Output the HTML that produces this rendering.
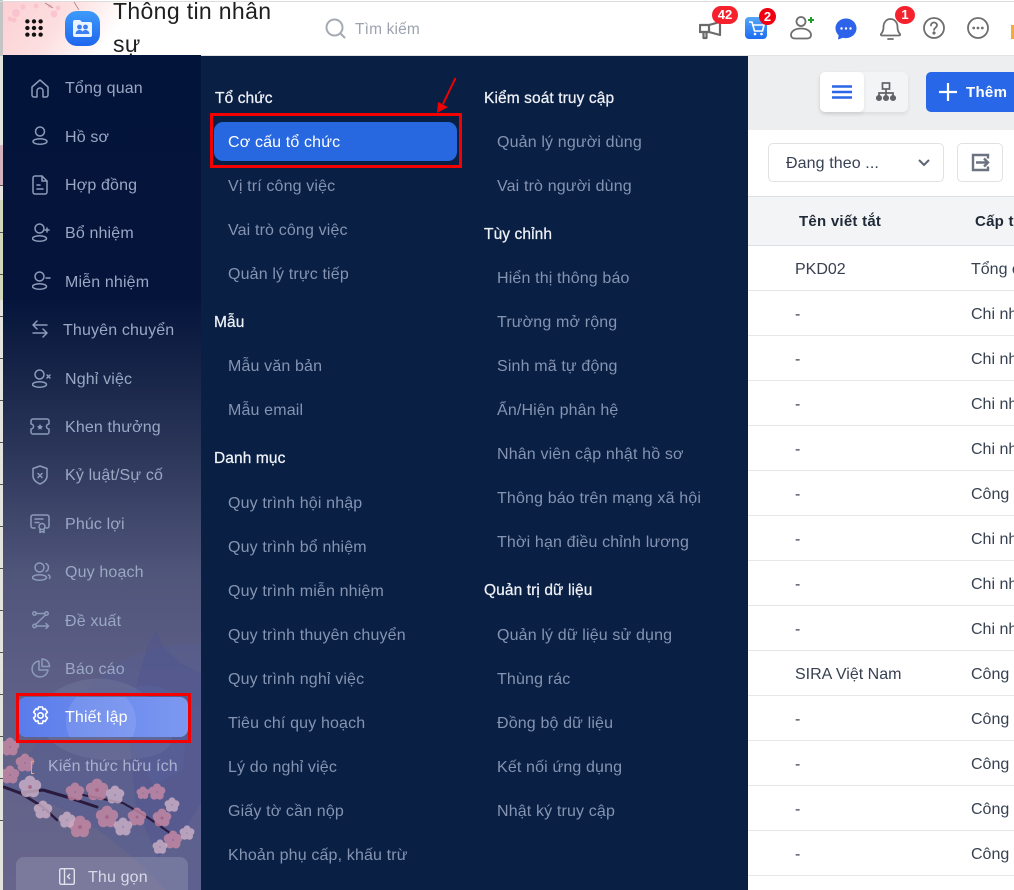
<!DOCTYPE html>
<html lang="vi"><head><meta charset="utf-8"><title>Thông tin nhân sự</title>
<style>
*{box-sizing:border-box}
html,body{margin:0;padding:0;width:1014px;height:890px;overflow:hidden;background:#fff}
body{position:relative;font-family:"Liberation Sans","Noto Sans CJK SC",sans-serif}
#p{position:absolute;left:0;top:0;width:1014px;height:890px;overflow:hidden;contain:paint}
#r{position:absolute;left:748px;top:0;width:266px;height:890px;overflow:hidden}
#r .t{margin-left:-748px}
.a{position:absolute;white-space:nowrap}
.t{position:absolute;white-space:nowrap;line-height:20px;height:20px;margin-top:2px;font-size:16px;letter-spacing:.15px}
.s{color:#9aa8c4}
.m{color:#8494b2;left:228px}
.n{color:#8494b2;left:497px}
.h{color:#eef1f6;font-size:15.5px;letter-spacing:.1px;margin-top:1px;-webkit-text-stroke:.25px #eef1f6}
.c{color:#374151;font-size:16px;letter-spacing:0}
.th{color:#1f2937;font-weight:700;font-size:15px;letter-spacing:.25px}
.l{position:absolute;left:748px;width:266px;height:1px;background:#e5e7eb}
.k{position:absolute;left:0;width:3px;height:1px;background:#555}
svg{position:absolute}
.ic{fill:none;stroke:#8c9bb8;stroke-width:1.5;stroke-linecap:round;stroke-linejoin:round}
.b{position:absolute;background:#f5212d;color:#fff;font-weight:700;font-size:13px;text-align:center;line-height:17px;border-radius:9px;height:18px}
</style></head><body><div id="p">

<!-- left strip -->
<div class="a" style="left:0;top:0;width:3px;height:890px;background:#e4e4df"></div>
<div class="a" style="left:0;top:0;width:3px;height:56px;background:#c4c4c4"></div>
<div class="a" style="left:0;top:145px;width:3px;height:40px;background:#d4b3bd"></div>
<div class="a" style="left:0;top:200px;width:3px;height:100px;background:#d2d8ba"></div>
<div class="k" style="top:185px"></div><div class="k" style="top:232px"></div><div class="k" style="top:274px"></div><div class="k" style="top:316px"></div><div class="k" style="top:358px"></div><div class="k" style="top:400px"></div><div class="k" style="top:442px"></div><div class="k" style="top:484px"></div><div class="k" style="top:526px"></div><div class="k" style="top:568px"></div><div class="k" style="top:610px"></div><div class="k" style="top:652px"></div><div class="k" style="top:694px"></div><div class="k" style="top:736px"></div><div class="k" style="top:778px"></div><div class="k" style="top:820px"></div>

<!-- header -->
<div class="a" style="left:3px;top:0;width:1011px;height:56px;background:#fff;border-bottom:1px solid #e2e3e6"></div>
<div class="a" style="left:3px;top:2px;width:120px;height:53px;background:linear-gradient(125deg,#fcd0d3 0%,#fddfe0 45%,#ffffff 85%)"></div>
<div class="a" style="left:0;top:1px;width:1014px;height:1px;background:#dcdcdc"></div>
<svg style="left:0;top:0" width="130" height="56">
<g fill="#f9bccb" opacity=".7"><circle cx="16" cy="13" r="4"/><circle cx="10" cy="19" r="2.500"/><circle cx="23" cy="7" r="2.500"/><circle cx="36" cy="6" r="2.500"/><circle cx="54" cy="14" r="3.500"/><circle cx="58" cy="8" r="2.500"/><circle cx="50" cy="6" r="2"/><circle cx="14" cy="20" r="2.500"/></g>
<path d="M74 2l5 8M45 3l8 5" stroke="#a88085" stroke-width=".8" fill="none"/>
</svg>
<svg style="left:25px;top:19px" width="18" height="18" viewBox="-0.500 -0.500 19 19" fill="#111"><circle cx="2" cy="2" r="2.300"/><circle cx="9" cy="2" r="2.300"/><circle cx="16" cy="2" r="2.300"/><circle cx="2" cy="9" r="2.300"/><circle cx="9" cy="9" r="2.300"/><circle cx="16" cy="9" r="2.300"/><circle cx="2" cy="16" r="2.300"/><circle cx="9" cy="16" r="2.300"/><circle cx="16" cy="16" r="2.300"/></svg>
<svg style="left:65px;top:11px" width="35" height="35">
<defs><linearGradient id="lg" x1="0" y1="0" x2="0" y2="1"><stop offset="0" stop-color="#3d9bfb"/><stop offset="1" stop-color="#1f66ee"/></linearGradient></defs>
<rect width="35" height="35" rx="12" fill="url(#lg)"/>
<path d="M8 11a2 2 0 0 1 2-2h5l2 2h8a2 2 0 0 1 2 2v11a2 2 0 0 1-2 2H10a2 2 0 0 1-2-2z" fill="#eaf3ff"/>
<circle cx="14.500" cy="16" r="2.400" fill="#3a80f0"/><circle cx="20.500" cy="16" r="2.400" fill="#3a80f0"/>
<path d="M10.500 23c.4-3 2-4 4-4s3.600 1 4 4zM17 23c.4-3 1.800-4 3.500-4s3.600 1 4 4z" fill="#3a80f0"/>
</svg>
<div class="a" style="left:113px;top:-5px;width:175px;font-size:23px;line-height:33px;color:#1f1f1f;letter-spacing:.35px;white-space:normal">Thông tin nhân<br>sự</div>
<svg style="left:325px;top:18px" width="22" height="22" fill="none" stroke="#a4a9b2" stroke-width="2" stroke-linecap="round"><circle cx="9.500" cy="9.500" r="8"/><path d="M15.500 15.500l4 4"/></svg>
<div class="t" style="left:355px;top:18px;color:#9ca3af;font-size:15.500px;letter-spacing:.15px">Tìm kiếm</div>

<!-- header icons -->
<svg style="left:699px;top:21px" width="24" height="19" fill="none" stroke="#6b6b6b" stroke-width="2.200" stroke-linejoin="round" stroke-linecap="round"><path d="M1 4h9l11-3v13l-11-3H1z"/><path d="M4.500 11v6h3v-6"/><path d="M10 4v7"/></svg>
<div class="b" style="left:712px;top:6px;width:26px">42</div>
<svg style="left:745px;top:17px" width="23" height="23">
<defs><linearGradient id="cg" x1="0" y1="0" x2="0" y2="1"><stop offset="0" stop-color="#55a8f8"/><stop offset="1" stop-color="#1c6cf2"/></linearGradient></defs>
<rect width="22" height="22" rx="4" fill="url(#cg)"/>
<path d="M4 5h3l2.500 9h8l1.500-6H8" fill="none" stroke="#fff" stroke-width="1.600" stroke-linejoin="round"/><circle cx="10" cy="17" r="1.300" fill="#fff"/><circle cx="16.500" cy="17" r="1.300" fill="#fff"/>
</svg>
<div class="a" style="left:759px;top:8px;width:17px;height:17px;border-radius:50%;background:#f00010;color:#fff;font-weight:700;font-size:13px;text-align:center;line-height:17px">2</div>
<svg style="left:790px;top:15px" width="26" height="26" fill="none" stroke="#6e6e6e" stroke-width="1.800"><circle cx="11" cy="6.500" r="4.500"/><path d="M1 20c0-4 4.500-6.500 10-6.500S21 16 21 20c0 2.500-2 3.500-4 3.500H5c-2 0-4-1-4-3.500z"/><path d="M21 2v6M18 5h6" stroke="#1f9d2c" stroke-width="2"/></svg>
<svg style="left:835px;top:18px" width="22" height="22"><path d="M11 0.500c5.800 0 10.500 4.300 10.500 9.800s-4.700 9.800-10.500 9.800c-1 0-2-.1-2.900-.4L3 21.500l.6-4.300C1.700 15.500.5 13 .5 10.300.5 4.800 5.200.5 11 .5z" fill="#2d62ea"/><circle cx="6.500" cy="10.500" r="1.200" fill="#fff"/><circle cx="11" cy="10.500" r="1.200" fill="#fff"/><circle cx="15.500" cy="10.500" r="1.200" fill="#fff"/></svg>
<svg style="left:879px;top:16px" width="23" height="25" fill="none" stroke="#6e6e6e" stroke-width="1.800" stroke-linejoin="round"><path d="M2 18c2-2 2.500-4 2.500-7 0-4 2.500-8 7-8s7 4 7 8c0 3 .5 5 2.500 7 .5 1-.2 1.500-1 1.500H3c-.8 0-1.500-.5-1-1.500z"/><path d="M9 23h5" stroke-linecap="round"/></svg>
<div class="a" style="left:895px;top:6px;width:20px;height:18px;border-radius:50%;background:#f5212d;color:#fff;font-weight:700;font-size:13px;text-align:center;line-height:17px">1</div>
<svg style="left:923px;top:17px" width="22" height="22" fill="none" stroke="#6e6e6e" stroke-width="1.800"><circle cx="11" cy="11" r="10"/><path d="M8 8.500c0-1.800 1.300-3 3-3s3 1.200 3 2.800c0 2.200-3 2.500-3 4.700" stroke-linecap="round"/><circle cx="11" cy="16" r=".7" fill="#6e6e6e"/></svg>
<svg style="left:967px;top:17px" width="22" height="22" fill="none" stroke="#6e6e6e" stroke-width="1.800"><circle cx="11" cy="11" r="10"/><circle cx="6.700" cy="11" r=".5" fill="#6e6e6e"/><circle cx="11" cy="11" r=".5" fill="#6e6e6e"/><circle cx="15.300" cy="11" r=".5" fill="#6e6e6e"/></svg>
<div class="a" style="left:1011px;top:25px;width:3px;height:14px;background:#f5a93a"></div>

<!-- toolbar band -->
<div class="a" style="left:748px;top:56px;width:266px;height:74px;background:#eceef0"></div>
<div class="a" style="left:820px;top:72px;width:88px;height:40px;border-radius:5px;background:#f3f4f6;box-shadow:0 2px 4px rgba(0,0,0,.08)"></div>
<div class="a" style="left:820px;top:72px;width:44px;height:40px;border-radius:5px;background:#fff;box-shadow:0 2px 4px rgba(0,0,0,.08)"></div>
<svg style="left:832px;top:85px" width="20" height="14" stroke="#2a66e6" stroke-width="2.400"><path d="M0 1.500h20M0 7h20M0 12.500h20"/></svg>
<svg style="left:876px;top:82px" width="20" height="20" fill="none" stroke="#5f6368" stroke-width="1.700"><rect x="6.500" y="1" width="7" height="6"/><path d="M10 7v4M3 14v-3h14v3M10 11v3"/><circle cx="3" cy="16" r="2.200" fill="#5f6368"/><circle cx="10" cy="16" r="2.200" fill="#5f6368"/><circle cx="17" cy="16" r="2.200" fill="#5f6368"/></svg>
<div class="a" style="left:926px;top:72px;width:88px;height:40px;background:#2767e8;border-radius:5px 0 0 5px"></div>
<svg style="left:939px;top:83px" width="18" height="18" stroke="#fff" stroke-width="2.200"><path d="M9 0v18M0 9h18"/></svg>
<div class="t" style="left:966px;top:81px;color:#fff;font-size:15px;font-weight:700;letter-spacing:.3px">Thêm</div>

<!-- filter row -->
<div class="a" style="left:768px;top:143px;width:176px;height:39px;border:1px solid #dfe1e5;border-radius:5px;background:#fff"></div>
<div class="t" style="left:786px;top:152px;color:#374151;font-size:16px;letter-spacing:.1px">Đang theo ...</div>
<svg style="left:918px;top:159px" width="12" height="8" fill="none" stroke="#5b6472" stroke-width="2"><path d="M1 1l5 5 5-5"/></svg>
<div class="a" style="left:957px;top:143px;width:46px;height:39px;border:1px solid #dfe1e5;border-radius:5px;background:#fff"></div>
<svg style="left:971px;top:153px" width="19" height="19" fill="none" stroke="#6b7280" stroke-width="2.400"><path d="M17 5.500V2H2v15h15v-3.500"/><path d="M5 9.500h12M13 5.500l4 4-4 4"/></svg>

<!-- table -->
<div class="a" style="left:748px;top:196px;width:266px;height:50px;background:#f3f4f6;border-top:1px solid #dcdfe6;border-bottom:1px solid #dcdfe6"></div>
<div class="l" style="top:290px"></div><div class="l" style="top:335px"></div><div class="l" style="top:380px"></div><div class="l" style="top:425px"></div><div class="l" style="top:470px"></div><div class="l" style="top:515px"></div><div class="l" style="top:560px"></div><div class="l" style="top:605px"></div><div class="l" style="top:650px"></div><div class="l" style="top:695px"></div><div class="l" style="top:740px"></div><div class="l" style="top:785px"></div><div class="l" style="top:830px"></div><div class="l" style="top:875px"></div>
<div id="r">
<div class="t th" style="left:799px;top:210px">Tên viết tắt</div>
<div class="t th" style="left:975px;top:210px">Cấp tổ chức</div>
<div class="t c" style="left:795px;top:258px">PKD02</div><div class="t c" style="left:971px;top:258px">Tổng công ty</div>
<div class="t c" style="left:795px;top:303px">-</div><div class="t c" style="left:971px;top:303px">Chi nhánh</div>
<div class="t c" style="left:795px;top:348px">-</div><div class="t c" style="left:971px;top:348px">Chi nhánh</div>
<div class="t c" style="left:795px;top:393px">-</div><div class="t c" style="left:971px;top:393px">Chi nhánh</div>
<div class="t c" style="left:795px;top:438px">-</div><div class="t c" style="left:971px;top:438px">Chi nhánh</div>
<div class="t c" style="left:795px;top:483px">-</div><div class="t c" style="left:971px;top:483px">Công ty</div>
<div class="t c" style="left:795px;top:528px">-</div><div class="t c" style="left:971px;top:528px">Chi nhánh</div>
<div class="t c" style="left:795px;top:573px">-</div><div class="t c" style="left:971px;top:573px">Chi nhánh</div>
<div class="t c" style="left:795px;top:618px">-</div><div class="t c" style="left:971px;top:618px">Chi nhánh</div>
<div class="t c" style="left:795px;top:663px">SIRA Việt Nam</div><div class="t c" style="left:971px;top:663px">Công ty</div>
<div class="t c" style="left:795px;top:708px">-</div><div class="t c" style="left:971px;top:708px">Công ty</div>
<div class="t c" style="left:795px;top:753px">-</div><div class="t c" style="left:971px;top:753px">Công ty</div>
<div class="t c" style="left:795px;top:798px">-</div><div class="t c" style="left:971px;top:798px">Công ty</div>
<div class="t c" style="left:795px;top:843px">-</div><div class="t c" style="left:971px;top:843px">Công ty</div>
</div>

<!-- sidebar -->
<div class="a" style="left:3px;top:55px;width:198px;height:835px;background:linear-gradient(180deg,#03143a 0%,#04143a 29%,#2a3558 47%,#50557a 62%,#5f6088 77%,#67658c 100%)"></div>
<svg style="left:3px;top:0" width="198" height="890" viewBox="3 0 198 890">
<defs>
<g id="fl"><circle cx="0" cy="-5" r="4.500"/><circle cx="4.800" cy="-1.500" r="4.500"/><circle cx="3" cy="4" r="4.500"/><circle cx="-3" cy="4" r="4.500"/><circle cx="-4.800" cy="-1.500" r="4.500"/></g>
</defs>
<path d="M3 780C40 745 70 700 115 665c30-15 60-25 86-20v245H165C130 850 70 800 3 790z" fill="#565e92" opacity=".5"/>
<path d="M148 645l8-14 6 14 18 18 21 10v130l-18 30-25 25-22-50-8-80 10-50z" fill="#4f5591" opacity=".45"/>
<path d="M45 700c30-30 85-30 115 10s0 50-50 50-85-30-65-60z" fill="#7f86a8" opacity=".3"/>
<path d="M128 690c20-10 45-5 60 20l-5 60-30 15-25-50z" fill="#5a6aa5" opacity=".3"/>
<g fill="none" stroke="#2a1a3e" stroke-linecap="round" stroke-linejoin="round"><path d="M4 787l16 6 23-3 24 7 30 10" stroke-width="3"/><path d="M83 795l40 8 24 14 23 16" stroke-width="2"/><path d="M43 807l14 13" stroke-width="2.500"/><path d="M20 793l23 14" stroke-width="2.500"/></g>
<g fill="#c98aa5" opacity=".8">
<use href="#fl" x="10" y="747"/><use href="#fl" x="25" y="763"/><use href="#fl" x="10" y="775"/><use href="#fl" x="75" y="792"/><use href="#fl" x="97" y="790" transform="translate(97 790) scale(1.200) translate(-97 -790)"/><use href="#fl" x="107" y="817" transform="translate(107 817) scale(1.200) translate(-107 -817)"/><use href="#fl" x="80" y="827" transform="translate(80 827) scale(1.200) translate(-80 -827)"/><use href="#fl" x="137" y="817"/><use href="#fl" x="157" y="792" transform="translate(157 792) scale(.9) translate(-157 -792)"/><use href="#fl" x="162" y="818"/><use href="#fl" x="173" y="840"/><use href="#fl" x="143" y="793" transform="translate(143 793) scale(.7) translate(-143 -793)"/>
</g>
<g fill="#cfb2c8" opacity=".8">
<use href="#fl" x="30" y="787" transform="translate(30 787) scale(1.200) translate(-30 -787)"/><use href="#fl" x="43" y="810"/><use href="#fl" x="67" y="820" transform="translate(67 820) scale(.9) translate(-67 -820)"/><use href="#fl" x="115" y="795"/><use href="#fl" x="123" y="827"/><use href="#fl" x="172" y="805" transform="translate(172 805) scale(.8) translate(-172 -805)"/><use href="#fl" x="187" y="833" transform="translate(187 833) scale(.8) translate(-187 -833)"/><use href="#fl" x="160" y="847" transform="translate(160 847) scale(.8) translate(-160 -847)"/>
</g>
<g fill="#a85f7e" opacity=".7"><circle cx="30" cy="787" r="2"/><circle cx="97" cy="790" r="2"/><circle cx="107" cy="817" r="2"/><circle cx="80" cy="827" r="2"/><circle cx="137" cy="817" r="1.500"/><circle cx="162" cy="818" r="1.500"/></g>
</svg>

<!-- sidebar icons -->
<svg class="ic" style="left:30px;top:78px" width="20" height="20"><path d="M2 9l8-7 8 7v8a2 2 0 0 1-2 2h-3v-6a3 3 0 0 0-6 0v6H4a2 2 0 0 1-2-2z"/></svg>
<svg class="ic" style="left:32px;top:126px" width="16" height="20"><circle cx="8" cy="5.500" r="4.500"/><ellipse cx="8" cy="15.500" rx="7" ry="2.800"/></svg>
<svg class="ic" style="left:32px;top:175px" width="16" height="20"><path d="M3 1h7l5 5v11a2 2 0 0 1-2 2H3a2 2 0 0 1-2-2V3a2 2 0 0 1 2-2z"/><path d="M10 1v5h5M5 10h3M5 14h6"/></svg>
<svg class="ic" style="left:32px;top:223px" width="20" height="20"><circle cx="7.500" cy="5.500" r="4.500"/><ellipse cx="7.500" cy="15.500" rx="7" ry="2.800"/><path d="M15 5v4M13 7h4"/></svg>
<svg class="ic" style="left:32px;top:271px" width="20" height="20"><circle cx="7.500" cy="5.500" r="4.500"/><ellipse cx="7.500" cy="15.500" rx="7" ry="2.800"/><path d="M14 7h4"/></svg>
<svg class="ic" style="left:32px;top:320px" width="16" height="19"><path d="M15 5H1M5 1L1 5l4 4M1 13h14M11 9l4 4-4 4"/></svg>
<svg class="ic" style="left:32px;top:369px" width="20" height="20"><circle cx="7.500" cy="5.500" r="4.500"/><ellipse cx="7.500" cy="15.500" rx="7" ry="2.800"/><path d="M15 6l3 3M18 6l-3 3"/></svg>
<svg class="ic" style="left:30px;top:418px" width="20" height="17"><path d="M3 1h14a2 2 0 0 1 2 2v3a2.500 2.500 0 0 0 0 5v3a2 2 0 0 1-2 2H3a2 2 0 0 1-2-2v-3a2.500 2.500 0 0 0 0-5V3a2 2 0 0 1 2-2z"/><path d="M10 6l1 2 2 .3-1.500 1.500.3 2-1.800-1-1.800 1 .3-2L7 8.300 9 8z" fill="#8c9bb8" stroke="none"/></svg>
<svg class="ic" style="left:32px;top:465px" width="16" height="20"><path d="M8 1l7 2.500V11c0 4-3.500 6.500-7 8-3.500-1.500-7-4-7-8V3.500z"/><path d="M6 8.500l4 4M10 8.500l-4 4"/></svg>
<svg class="ic" style="left:30px;top:514px" width="20" height="20"><path d="M5 14H3a2 2 0 0 1-2-2V3a2 2 0 0 1 2-2h14a2 2 0 0 1 2 2v9a2 2 0 0 1-2 2h-1"/><path d="M5 5h8M5 8.500h4"/><circle cx="12" cy="12.500" r="3"/><path d="M10 15v3.500l2-1 2 1V15"/></svg>
<svg class="ic" style="left:32px;top:562px" width="20" height="20"><circle cx="7.500" cy="5.500" r="4.500"/><ellipse cx="7.500" cy="15.500" rx="7" ry="2.800"/><path d="M14 1.500a4.500 4.500 0 0 1 0 8M16.500 13c1.500.5 2 2 1 3.500"/></svg>
<svg class="ic" style="left:32px;top:611px" width="18" height="18"><circle cx="2.500" cy="2.500" r="1.700"/><circle cx="14.500" cy="2.500" r="1.700"/><circle cx="2.500" cy="15" r="1.700"/><path d="M4.500 2.500h8M13.500 4L3.500 13.500M4.500 15h12M14 12.500l2.500 2.500-2.500 2.500"/></svg>
<svg class="ic" style="left:31px;top:658px" width="20" height="20"><path d="M8 3a8 8 0 1 0 9 9H8z"/><path d="M11 1a7.500 7.500 0 0 1 7.500 7.500H11z"/></svg>

<div class="t s" style="left:65px;top:77px">Tổng quan</div>
<div class="t s" style="left:65px;top:126px">Hồ sơ</div>
<div class="t s" style="left:65px;top:174px">Hợp đồng</div>
<div class="t s" style="left:65px;top:222px">Bổ nhiệm</div>
<div class="t s" style="left:65px;top:271px">Miễn nhiệm</div>
<div class="t s" style="left:63px;top:319px">Thuyên chuyển</div>
<div class="t s" style="left:65px;top:368px">Nghỉ việc</div>
<div class="t s" style="left:65px;top:416px">Khen thưởng</div>
<div class="t s" style="left:65px;top:464px">Kỷ luật/Sự cố</div>
<div class="t s" style="left:65px;top:513px">Phúc lợi</div>
<div class="t s" style="left:65px;top:561px">Quy hoạch</div>
<div class="t s" style="left:65px;top:610px">Đề xuất</div>
<div class="t s" style="left:65px;top:658px">Báo cáo</div>

<!-- Thiết lập active -->
<div class="a" style="left:18px;top:697px;width:170px;height:40px;border-radius:8px;background:linear-gradient(90deg,#5a7ceb,#7c98f0);overflow:hidden"><div class="a" style="left:48px;top:-10px;width:70px;height:70px;border-radius:50%;background:rgba(255,255,255,.1)"></div></div>
<svg style="left:31px;top:706px" width="19" height="20" fill="none" stroke="#fff" stroke-width="1.600" stroke-linejoin="round"><path d="M7.500 1h4l.6 2.500 2-.8 2.300 3.500-1.800 2 0 2 1.800 1.800-2.300 3.500-2-.8-.6 2.800h-4l-.6-2.800-2 .8L2.600 12l1.800-1.800v-2L2.600 6.200l2.300-3.500 2 .8z"/><circle cx="9.500" cy="9.500" r="2.700"/></svg>
<div class="t" style="left:65px;top:706px;color:#fff">Thiết lập</div>
<div class="a" style="left:16px;top:693px;width:175px;height:50px;border:3px solid #f50000"></div>

<div class="a" style="left:31px;top:761px;width:3px;height:13px;border:1.500px solid #f4a261;border-right:none;background:transparent"></div>
<div class="t" style="left:48px;top:755px;color:#a9b1d0">Kiến thức hữu ích</div>

<!-- Thu gọn -->
<div class="a" style="left:16px;top:857px;width:172px;height:33px;background:rgba(255,255,255,.14);border-radius:8px 8px 0 0"></div>
<svg style="left:59px;top:868px" width="16" height="17" fill="none" stroke="#dfe3ee" stroke-width="1.400"><rect x=".7" y=".7" width="14.600" height="15.600" rx="1.500"/><path d="M5.500 1v15"/><path d="M11 6l-2.500 2.500L11 11"/></svg>
<div class="t" style="left:88px;top:866px;color:#d7dbea">Thu gọn</div>

<!-- menu panel -->
<div class="a" style="left:201px;top:56px;width:547px;height:834px;background:#0a1f44"></div>

<div class="t h" style="left:215px;top:88px">Tổ chức</div>
<div class="a" style="left:214px;top:122px;width:243px;height:39px;background:#2767e0;border-radius:9px"></div>
<div class="t" style="left:228px;top:131px;color:#fff">Cơ cấu tổ chức</div>
<div class="a" style="left:210px;top:113px;width:252px;height:55px;border:3px solid #f50000"></div>
<svg style="left:434px;top:76px" width="24" height="38"><path d="M21.500 2L9 28" stroke="#f00000" stroke-width="2" fill="none"/><path d="M3 37l1-11 10 5z" fill="#f00000"/></svg>
<div class="t m" style="top:175px">Vị trí công việc</div>
<div class="t m" style="top:219px">Vai trò công việc</div>
<div class="t m" style="top:263px">Quản lý trực tiếp</div>
<div class="t h" style="left:214px;top:312px">Mẫu</div>
<div class="t m" style="top:355px">Mẫu văn bản</div>
<div class="t m" style="top:399px">Mẫu email</div>
<div class="t h" style="left:214px;top:448px">Danh mục</div>
<div class="t m" style="top:492px">Quy trình hội nhập</div>
<div class="t m" style="top:536px">Quy trình bổ nhiệm</div>
<div class="t m" style="top:580px">Quy trình miễn nhiệm</div>
<div class="t m" style="top:624px">Quy trình thuyên chuyển</div>
<div class="t m" style="top:668px">Quy trình nghỉ việc</div>
<div class="t m" style="top:712px">Tiêu chí quy hoạch</div>
<div class="t m" style="top:756px">Lý do nghỉ việc</div>
<div class="t m" style="top:800px">Giấy tờ cần nộp</div>
<div class="t m" style="top:844px">Khoản phụ cấp, khấu trừ</div>

<div class="t h" style="left:484px;top:88px">Kiểm soát truy cập</div>
<div class="t n" style="top:131px">Quản lý người dùng</div>
<div class="t n" style="top:175px">Vai trò người dùng</div>
<div class="t h" style="left:484px;top:224px">Tùy chỉnh</div>
<div class="t n" style="top:267px">Hiển thị thông báo</div>
<div class="t n" style="top:311px">Trường mở rộng</div>
<div class="t n" style="top:355px">Sinh mã tự động</div>
<div class="t n" style="top:399px">Ẩn/Hiện phân hệ</div>
<div class="t n" style="top:443px">Nhân viên cập nhật hồ sơ</div>
<div class="t n" style="top:487px">Thông báo trên mạng xã hội</div>
<div class="t n" style="top:531px">Thời hạn điều chỉnh lương</div>
<div class="t h" style="left:484px;top:580px">Quản trị dữ liệu</div>
<div class="t n" style="top:624px">Quản lý dữ liệu sử dụng</div>
<div class="t n" style="top:668px">Thùng rác</div>
<div class="t n" style="top:712px">Đồng bộ dữ liệu</div>
<div class="t n" style="top:756px">Kết nối ứng dụng</div>
<div class="t n" style="top:800px">Nhật ký truy cập</div>

</div></body></html>
